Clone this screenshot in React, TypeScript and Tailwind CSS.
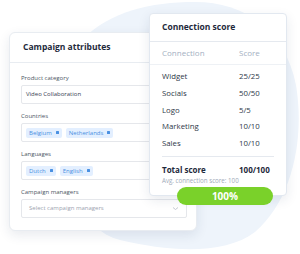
import React from 'react';

const font = { fontFamily: '"Open Sans", "Liberation Sans", sans-serif' };

const Chip: React.FC<{ label: string }> = ({ label }) => (
  <span className="flex items-center gap-[4px] h-[10px] px-[3px] rounded-[2px] bg-[#e3efff] text-[#4a90e2] text-[6px] leading-none">
    {label}
    <span className="w-[3px] h-[3px] bg-[#4a90e2] rounded-[0.5px]" />
  </span>
);

const Field: React.FC<{ label: string; children: React.ReactNode }> = ({ label, children }) => (
  <div className="flex flex-col">
    <div className="h-[10px] mb-[2px] flex items-center text-[6px] text-[#4b5563]">{label}</div>
    <div className="h-[19px] border border-[#e5e7eb] rounded-[2px] flex items-center px-[4px] gap-[4px]">
      {children}
    </div>
  </div>
);

const rows = [
  ['Widget', '25/25'],
  ['Socials', '50/50'],
  ['Logo', '5/5'],
  ['Marketing', '10/10'],
  ['Sales', '10/10'],
];

export default function App() {
  return (
    <div className="relative w-[300px] h-[254px] bg-white overflow-hidden" style={font}>
      <svg className="absolute left-0 top-0" width="300" height="254" viewBox="0 0 300 254">
        <path
          d="M84 38 C110 12 150 2 195 2 C245 2 285 30 296 85 C305 140 292 200 255 232 C225 255 170 252 120 240 C80 230 62 180 62 120 C62 80 70 52 84 38 Z"
          fill="#eef4fb"
        />
      </svg>

      {/* left card */}
      <div className="absolute left-[9px] top-[32px] w-[188px] h-[199px] bg-white rounded-[6px] border border-[#e8ecf1] shadow-[0_4px_12px_rgba(30,50,90,0.10)] flex flex-col">
        <div className="h-[30px] px-[13px] flex items-center border-b border-[#e8ecf1] text-[8.5px] font-bold text-[#1e293b]">
          Campaign attributes
        </div>
        <div className="flex flex-col gap-[7px] pt-[10px] pl-[11px] pr-[9px]">
          <Field label="Product category">
            <span className="text-[6px] text-[#374151]">Video Collaboration</span>
          </Field>
          <Field label="Countries">
            <Chip label="Belgium" />
            <Chip label="Netherlands" />
          </Field>
          <Field label="Languages">
            <Chip label="Dutch" />
            <Chip label="English" />
          </Field>
          <Field label="Campaign managers">
            <span className="flex-1 pl-[3px] text-[6px] text-[#9ca3af]">Select campaign managers</span>
            <svg width="7" height="5" viewBox="0 0 7 5" className="mr-[3px]">
              <path d="M1 1.5 L3.5 3.5 L6 1.5" stroke="#b6bcc6" strokeWidth="0.8" fill="none" />
            </svg>
          </Field>
        </div>
      </div>

      {/* right card */}
      <div className="absolute left-[149px] top-[13px] w-[138px] h-[183px] bg-white rounded-[4px] border border-[#e2e8f0] shadow-[0_4px_12px_rgba(30,50,90,0.10)] flex flex-col">
        <div className="h-[28px] px-[12px] flex items-center border-b border-[#e5e9ef] text-[8.5px] font-bold text-[#1e293b]">
          Connection score
        </div>
        <div className="h-[23px] px-[12px] flex items-center border-b border-[#eef1f5] text-[8px] text-[#a3b0c2]">
          <span className="w-[77px]">Connection</span>
          <span>Score</span>
        </div>
        <div className="pt-[4px] px-[12px] flex flex-col">
          {rows.map(([name, score]) => (
            <div key={name} className="h-[16.6px] flex items-center text-[7.8px] text-[#2d3748]">
              <span className="w-[77px]">{name}</span>
              <span>{score}</span>
            </div>
          ))}
          <div className="mt-[4px] border-t border-[#e5e9ef]" />
          <div className="mt-[7px] h-[12px] flex items-center text-[8px] font-bold text-[#1e293b]">
            <span className="w-[77px]">Total score</span>
            <span>100/100</span>
          </div>
          <div className="h-[9px] flex items-center text-[6.2px] text-[#a0aab8]">Avg. connection score: 100</div>
        </div>
      </div>

      <div className="absolute left-[177px] top-[187px] w-[96px] h-[18px] rounded-full bg-[#7ad12a] flex items-center justify-center text-white text-[10px] font-bold">
        100%
      </div>
    </div>
  );
}
